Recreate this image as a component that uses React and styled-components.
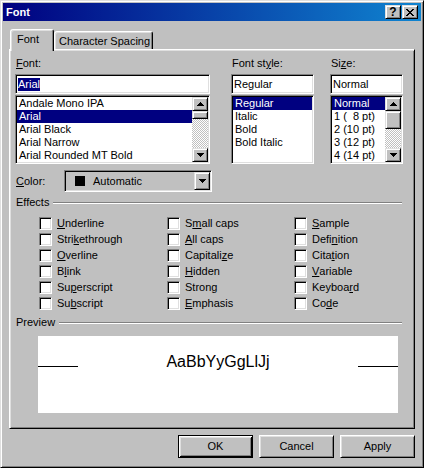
import React from 'react';
import styled, { createGlobalStyle, css } from 'styled-components';

const fontNames = ['Andale Mono IPA', 'Arial', 'Arial Black', 'Arial Narrow', 'Arial Rounded MT Bold'];
const styles = ['Regular', 'Italic', 'Bold', 'Bold Italic'];
const sizes = ['Normal', '1 (  8 pt)', '2 (10 pt)', '3 (12 pt)', '4 (14 pt)'];

// label text + index of the mnemonic letter
const effects = [
  ['Underline', 0], ['Strikethrough', 4], ['Overline', 0], ['Blink', 1], ['Superscript', 2], ['Subscript', 2],
  ['Small caps', 1], ['All caps', 0], ['Capitalize', 8], ['Hidden', 0], ['Strong', 5], ['Emphasis', 0],
  ['Sample', 0], ['Definition', 4], ['Citation', 4], ['Variable', 0], ['Keyboard', 6], ['Code', 2],
];

const closeRows = [[[0, 2], [6, 2]], [[1, 2], [5, 2]], [[2, 4]], [[3, 2]], [[2, 4]], [[1, 2], [5, 2]], [[0, 2], [6, 2]]];

const Mnemonic = ({ text, at }) => (
  <>
    {text.slice(0, at)}
    <u>{text[at]}</u>
    {text.slice(at + 1)}
  </>
);

const Arrow = ({ down }) => (
  <svg width="7" height="4" viewBox="0 0 7 4" shapeRendering="crispEdges">
    {[0, 1, 2, 3].map((i) => {
      const w = down ? 7 - i * 2 : 1 + i * 2;
      return <rect key={i} x={(7 - w) / 2} y={i} width={w} height="1" fill="#000" />;
    })}
  </svg>
);

const CloseIcon = () => (
  <svg width="8" height="7" viewBox="0 0 8 7" shapeRendering="crispEdges">
    {closeRows.map((row, y) =>
      row.map(([x, w]) => <rect key={`${y}-${x}`} x={x} y={y} width={w} height="1" fill="#000" />)
    )}
  </svg>
);

const ScrollBar = ({ thumb }) => (
  <Scroll>
    <ScrollButton>
      <Arrow />
    </ScrollButton>
    <Track>
      <Thumb $size={thumb} />
    </Track>
    <ScrollButton>
      <Arrow down />
    </ScrollButton>
  </Scroll>
);

const List = ({ items, selected, thumb }) => (
  <ListBox>
    <Rows>
      {items.map((item) => (
        <Row key={item} $selected={item === selected}>
          {item}
        </Row>
      ))}
    </Rows>
    {thumb ? <ScrollBar thumb={thumb} /> : null}
  </ListBox>
);

export default function App() {
  return (
    <>
      <GlobalStyle />
      <Window>
        <TitleBar>
          <TitleText>Font</TitleText>
          <TitleButton>?</TitleButton>
          <TitleButton $gap={1}>
            <CloseIcon />
          </TitleButton>
        </TitleBar>

        <Body>
          <Tabs>
            <Tab $active $width={44} $pad={6}>Font</Tab>
            <Tab $width={99} $pad={4}>Character Spacing</Tab>
          </Tabs>

          <Panel>
            <Columns>
              <Column $width={195}>
                <Label><Mnemonic text="Font:" at={0} /></Label>
                <Field><Selection>Arial</Selection></Field>
                <List items={fontNames} selected="Arial" thumb={8} />
              </Column>
              <Column $width={83} $gap={21}>
                <Label><Mnemonic text="Font style:" at={7} /></Label>
                <Field>Regular</Field>
                <List items={styles} selected="Regular" />
              </Column>
              <Column $width={73} $gap={16}>
                <Label><Mnemonic text="Size:" at={2} /></Label>
                <Field>Normal</Field>
                <List items={sizes} selected="Normal" thumb={18} />
              </Column>
            </Columns>

            <ColorRow>
              <ColorLabel><Mnemonic text="Color:" at={0} /></ColorLabel>
              <Combo>
                <Swatch />
                <ComboText>Automatic</ComboText>
                <DropButton>
                  <Arrow down />
                </DropButton>
              </Combo>
            </ColorRow>

            <GroupHeader>
              Effects
              <Etch />
            </GroupHeader>
            <EffectsGrid>
              {effects.map(([text, at]) => (
                <Check key={text}>
                  <CheckBox />
                  <Mnemonic text={text} at={at} />
                </Check>
              ))}
            </EffectsGrid>

            <GroupHeader $top={5}>
              Preview
              <Etch />
            </GroupHeader>
            <Preview>
              <Baseline />
              <Sample>AaBbYyGgLlJj</Sample>
              <Baseline />
            </Preview>
          </Panel>

          <Buttons>
            <Button $default>OK</Button>
            <Button>Cancel</Button>
            <Button>Apply</Button>
          </Buttons>
        </Body>
      </Window>
    </>
  );
}

const GlobalStyle = createGlobalStyle`
  html, body {
    margin: 0;
    padding: 0;
    background: #c0c0c0;
  }
  body {
    font-family: "Liberation Sans", Arial, sans-serif;
    font-size: 11px;
    line-height: 13px;
    color: #000;
  }
`;

const raised = css`
  border: 1px solid;
  border-color: #dfdfdf #000 #000 #dfdfdf;
  box-shadow: inset 1px 1px #fff, inset -1px -1px #808080;
  background: #c0c0c0;
  box-sizing: border-box;
`;

const sunken = css`
  border: 1px solid;
  border-color: #808080 #fff #fff #808080;
  box-shadow: inset 1px 1px #000, inset -1px -1px #dfdfdf;
  box-sizing: border-box;
`;

const Window = styled.div`
  width: 424px;
  height: 468px;
  box-sizing: border-box;
  background: #c0c0c0;
  border: 1px solid;
  border-color: #dfdfdf #000 #000 #dfdfdf;
  box-shadow: inset 1px 1px #fff, inset -1px -1px #808080;
  padding: 2px;
  display: flex;
  flex-direction: column;
`;

const TitleBar = styled.div`
  height: 18px;
  display: flex;
  align-items: center;
  padding: 0 3px 0 3px;
  background: linear-gradient(to right, #000080, #1084d0);
  color: #fff;
  font-weight: bold;
  font-size: 11px;
`;

const TitleText = styled.span`
  flex: 1;
`;

const TitleButton = styled.div`
  ${raised};
  width: 16px;
  height: 14px;
  margin-left: ${(p) => p.$gap || 0}px;
  display: flex;
  align-items: center;
  justify-content: center;
  color: #000;
  font-size: 12px;
  font-weight: bold;
`;

const Body = styled.div`
  flex: 1;
  display: flex;
  flex-direction: column;
  padding: 0 6px;
`;

const Tabs = styled.div`
  height: 20px;
  margin-top: 8px;
  padding-left: 1px;
  display: flex;
  align-items: flex-end;
`;

const Tab = styled.div`
  width: ${(p) => p.$width}px;
  height: ${(p) => (p.$active ? 22 : 18)}px;
  margin-bottom: ${(p) => (p.$active ? -2 : 0)}px;
  box-sizing: border-box;
  padding: 3px 0 0 ${(p) => p.$pad}px;
  background: #c0c0c0;
  border: 1px solid;
  border-bottom: none;
  border-color: #fff #000 transparent #fff;
  border-radius: 3px 3px 0 0;
  box-shadow: inset 1px 1px #dfdfdf, inset -1px 0 #808080;
  position: relative;
  z-index: ${(p) => (p.$active ? 1 : 0)};
  white-space: nowrap;
`;

const Panel = styled.div`
  height: 380px;
  box-sizing: border-box;
  border: 1px solid;
  border-color: #fff #000 #000 #fff;
  box-shadow: inset 1px 1px #dfdfdf, inset -1px -1px #808080;
  padding: 7px 5px 0 5px;
  display: flex;
  flex-direction: column;
`;

const Columns = styled.div`
  display: flex;
`;

const Column = styled.div`
  width: ${(p) => p.$width}px;
  margin-left: ${(p) => p.$gap || 0}px;
  display: flex;
  flex-direction: column;
`;

const Label = styled.div`
  padding-left: 1px;
  margin-bottom: 4px;
`;

const Field = styled.div`
  ${sunken};
  height: 20px;
  background: #fff;
  padding: 0 2px;
  display: flex;
  align-items: center;
`;

const Selection = styled.span`
  background: #000080;
  color: #fff;
`;

const ListBox = styled.div`
  ${sunken};
  height: 69px;
  margin-top: 1px;
  padding: 1px;
  background: #fff;
  display: flex;
`;

const Rows = styled.div`
  flex: 1;
  min-width: 0;
  overflow: hidden;
`;

const Row = styled.div`
  height: 13px;
  padding-left: 2px;
  white-space: pre;
  background: ${(p) => (p.$selected ? '#000080' : 'transparent')};
  color: ${(p) => (p.$selected ? '#fff' : '#000')};
`;

const Scroll = styled.div`
  width: 16px;
  display: flex;
  flex-direction: column;
`;

const ScrollButton = styled.div`
  ${raised};
  height: 14px;
  display: flex;
  align-items: center;
  justify-content: center;
`;

const Track = styled.div`
  flex: 1;
  background-image: repeating-conic-gradient(#c0c0c0 0 25%, #fff 0 50%);
  background-size: 2px 2px;
`;

const Thumb = styled.div`
  ${raised};
  height: ${(p) => p.$size}px;
`;

const ColorRow = styled.div`
  display: flex;
  align-items: center;
  margin-top: 6px;
`;

const ColorLabel = styled.div`
  width: 49px;
  padding-left: 1px;
  box-sizing: border-box;
`;

const Combo = styled.div`
  ${sunken};
  width: 148px;
  height: 22px;
  padding: 2px;
  background: #c0c0c0;
  display: flex;
  align-items: center;
`;

const Swatch = styled.div`
  width: 10px;
  height: 10px;
  margin-left: 8px;
  background: #000;
`;

const ComboText = styled.span`
  flex: 1;
  margin-left: 8px;
`;

const DropButton = styled.div`
  ${raised};
  width: 16px;
  height: 18px;
  margin-right: -1px;
  display: flex;
  align-items: center;
  justify-content: center;
`;

const GroupHeader = styled.div`
  display: flex;
  align-items: center;
  margin-top: ${(p) => p.$top || 4}px;
  padding-left: 1px;
`;

const Etch = styled.div`
  flex: 1;
  height: 0;
  margin: 0 7px 0 4px;
  border-top: 1px solid #808080;
  border-bottom: 1px solid #fff;
`;

const EffectsGrid = styled.div`
  display: grid;
  grid-template-columns: 128px 127px auto;
  grid-template-rows: repeat(6, 16px);
  grid-auto-flow: column;
  margin-top: 6px;
  padding-left: 24px;
`;

const Check = styled.div`
  display: flex;
  align-items: center;
  white-space: nowrap;
`;

const CheckBox = styled.div`
  ${sunken};
  width: 13px;
  height: 13px;
  margin-right: 5px;
  background: #fff;
  flex: none;
`;

const Preview = styled.div`
  width: 360px;
  height: 77px;
  box-sizing: border-box;
  margin: 7px 0 0 23px;
  padding-top: 17px;
  background: #fff;
  display: flex;
  align-items: baseline;
  justify-content: space-between;
`;

const Baseline = styled.div`
  width: 40px;
  height: 1px;
  background: #000;
`;

const Sample = styled.span`
  font-size: 16px;
  line-height: 18px;
`;

const Buttons = styled.div`
  display: flex;
  justify-content: flex-end;
  gap: 6px;
  margin-top: 6px;
`;

const Button = styled.button`
  width: 75px;
  height: 23px;
  padding: 0;
  font: inherit;
  color: #000;
  background: #c0c0c0;
  box-sizing: border-box;
  border: 1px solid;
  ${(p) =>
    p.$default
      ? css`
          border-color: #000;
          box-shadow: inset 1px 1px #fff, inset -1px -1px #000, inset 2px 2px #dfdfdf, inset -2px -2px #808080;
        `
      : css`
          border-color: #fff #000 #000 #fff;
          box-shadow: inset 1px 1px #dfdfdf, inset -1px -1px #808080;
        `}
`;
